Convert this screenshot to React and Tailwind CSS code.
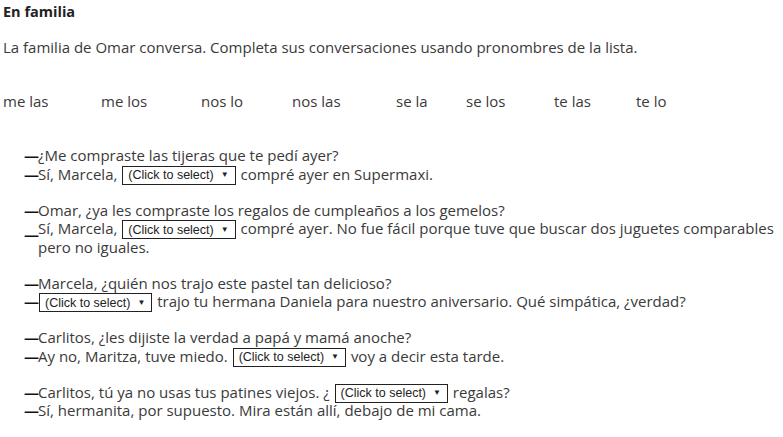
import React from 'react'

const Sel = () => (
    <span className="inline-flex items-center h-[19px] -my-[2px] border border-[#222] pl-[5px] pr-[6px] mx-[1px] align-middle font-['Liberation_Sans',sans-serif] text-[12.5px] text-[#222] leading-none">
        (Click to select)<span className="ml-[7px] text-[8px]">▼</span>
    </span>
)

const Dash = () => <span className="inline-block w-[14px] font-bold text-[#111]">—</span>

const words = [
    ['me las', 'w-[98px]'],
    ['me los', 'w-[100px]'],
    ['nos lo', 'w-[91px]'],
    ['nos las', 'w-[104px]'],
    ['se la', 'w-[70px]'],
    ['se los', 'w-[88px]'],
    ['te las', 'w-[82px]'],
    ['te lo', 'w-[60px]'],
]

const App = () => {
    return (
        <div className="w-[783px] h-[437px] bg-white overflow-hidden font-['Open_Sans',sans-serif] text-[15px] text-[#3a3a3a] pl-[3px]">
            <h1 className="pt-[3px] text-[14.5px] font-bold text-[#222] leading-[18px]">En familia</h1>
            <p className="mt-[17px] leading-[18px]">La familia de Omar conversa. Completa sus conversaciones usando pronombres de la lista.</p>
            <div className="flex mt-[36px] leading-[18px]">
                {words.map(([w, c]) => (
                    <span key={w} className={c}>{w}</span>
                ))}
            </div>
            <div className="pl-[21px] mt-[36px] leading-[18.5px] flex flex-col gap-[17.5px]">
                <div>
                    <div><Dash />¿Me compraste las tijeras que te pedí ayer?</div>
                    <div><Dash />Sí, Marcela, <Sel /> compré ayer en Supermaxi.</div>
                </div>
                <div>
                    <div><Dash />Omar, ¿ya les compraste los regalos de cumpleaños a los gemelos?</div>
                    <div className="flex">
                        <span className="w-[14px] shrink-0 font-bold text-[#111] translate-y-[6px]">—</span>
                        <span>Sí, Marcela, <Sel /> compré ayer. No fue fácil porque tuve que buscar dos juguetes comparables pero no iguales.</span>
                    </div>
                </div>
                <div>
                    <div><Dash />Marcela, ¿quién nos trajo este pastel tan delicioso?</div>
                    <div><Dash /><Sel /> trajo tu hermana Daniela para nuestro aniversario. Qué simpática, ¿verdad?</div>
                </div>
                <div>
                    <div><Dash />Carlitos, ¿les dijiste la verdad a papá y mamá anoche?</div>
                    <div><Dash />Ay no, Maritza, tuve miedo. <Sel /> voy a decir esta tarde.</div>
                </div>
                <div>
                    <div><Dash />Carlitos, tú ya no usas tus patines viejos. ¿ <Sel /> regalas?</div>
                    <div><Dash />Sí, hermanita, por supuesto. Mira están allí, debajo de mi cama.</div>
                </div>
            </div>
        </div>
    )
}

export default App
